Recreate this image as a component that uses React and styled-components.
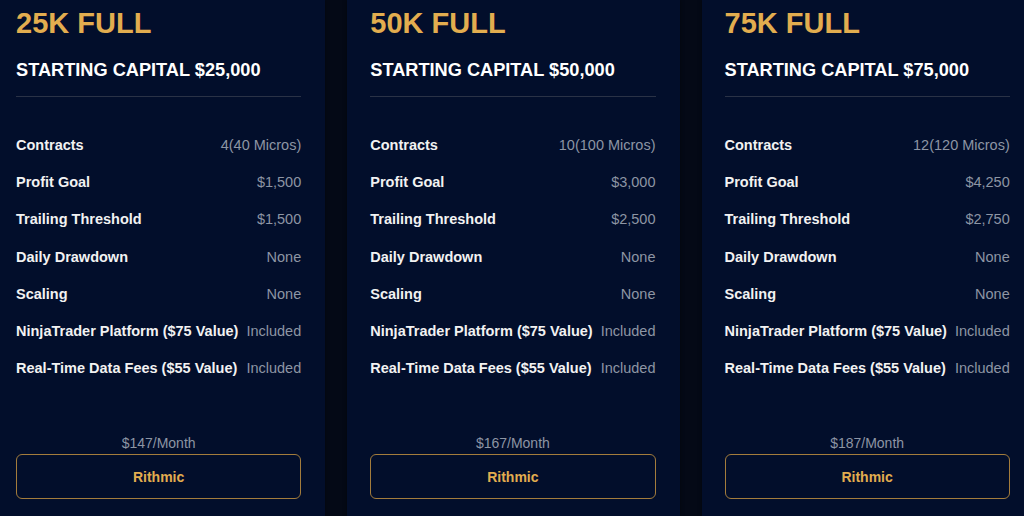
import React from "react";
import styled, { createGlobalStyle } from "styled-components";

const GlobalStyle = createGlobalStyle`
  html, body {
    margin: 0;
    padding: 0;
    background: #040916;
    overflow: hidden;
  }
  body {
    font-family: "Liberation Sans", Arial, sans-serif;
  }
`;

const Track = styled.div`
  display: flex;
  gap: 22px;
  height: 516px;
  margin-left: -7px;
`;

const Card = styled.div`
  flex: 0 0 332px;
  box-sizing: border-box;
  display: flex;
  flex-direction: column;
  padding: 6px 24px 17px 23px;
  background: #020e2b;
  box-shadow: 0 0 4px rgba(0, 0, 0, 0.45);
`;

const Header = styled.div`
  padding-bottom: 15px;
  border-bottom: 1px solid #2a3246;
`;

const Title = styled.h2`
  margin: 0;
  font-size: 29px;
  line-height: 35px;
  font-weight: 700;
  color: #e2ad4f;
`;

const Capital = styled.h3`
  margin: 18px 0 0;
  font-size: 18.2px;
  line-height: 22px;
  font-weight: 700;
  color: #ffffff;
`;

const List = styled.div`
  display: flex;
  flex-direction: column;
  padding-top: 30px;
`;

const Row = styled.div`
  display: flex;
  justify-content: space-between;
  align-items: center;
  gap: 8px;
  padding: 10px 0 10.2px;
  font-size: 14.5px;
  line-height: 17px;
`;

const Label = styled.span`
  color: #f2f2f2;
  font-weight: 700;
  white-space: nowrap;
`;

const Value = styled.span`
  color: #8d95a4;
  white-space: nowrap;
`;

const Footer = styled.div`
  margin-top: auto;
  display: flex;
  flex-direction: column;
  gap: 2px;
`;

const Price = styled.div`
  text-align: center;
  font-size: 14px;
  line-height: 17px;
  color: #8d95a4;
`;

const Button = styled.button`
  height: 45px;
  border: 1px solid #a37c3c;
  border-radius: 6px;
  background: transparent;
  color: #e2ad4f;
  font-family: inherit;
  font-size: 14px;
  font-weight: 700;
  cursor: pointer;
`;

const plans = [
  {
    name: "25K FULL",
    capital: "$25,000",
    contracts: "4(40 Micros)",
    goal: "$1,500",
    threshold: "$1,500",
    price: "$147/Month",
  },
  {
    name: "50K FULL",
    capital: "$50,000",
    contracts: "10(100 Micros)",
    goal: "$3,000",
    threshold: "$2,500",
    price: "$167/Month",
  },
  {
    name: "75K FULL",
    capital: "$75,000",
    contracts: "12(120 Micros)",
    goal: "$4,250",
    threshold: "$2,750",
    price: "$187/Month",
  },
];

export default function App() {
  return (
    <>
      <GlobalStyle />
      <Track>
        {plans.map((p) => {
          const rows = [
            ["Contracts", p.contracts],
            ["Profit Goal", p.goal],
            ["Trailing Threshold", p.threshold],
            ["Daily Drawdown", "None"],
            ["Scaling", "None"],
            ["NinjaTrader Platform ($75 Value)", "Included"],
            ["Real-Time Data Fees ($55 Value)", "Included"],
          ];
          return (
            <Card key={p.name}>
              <Header>
                <Title>{p.name}</Title>
                <Capital>STARTING CAPITAL {p.capital}</Capital>
              </Header>
              <List>
                {rows.map(([label, value]) => (
                  <Row key={label}>
                    <Label>{label}</Label>
                    <Value>{value}</Value>
                  </Row>
                ))}
              </List>
              <Footer>
                <Price>{p.price}</Price>
                <Button>Rithmic</Button>
              </Footer>
            </Card>
          );
        })}
      </Track>
    </>
  );
}
